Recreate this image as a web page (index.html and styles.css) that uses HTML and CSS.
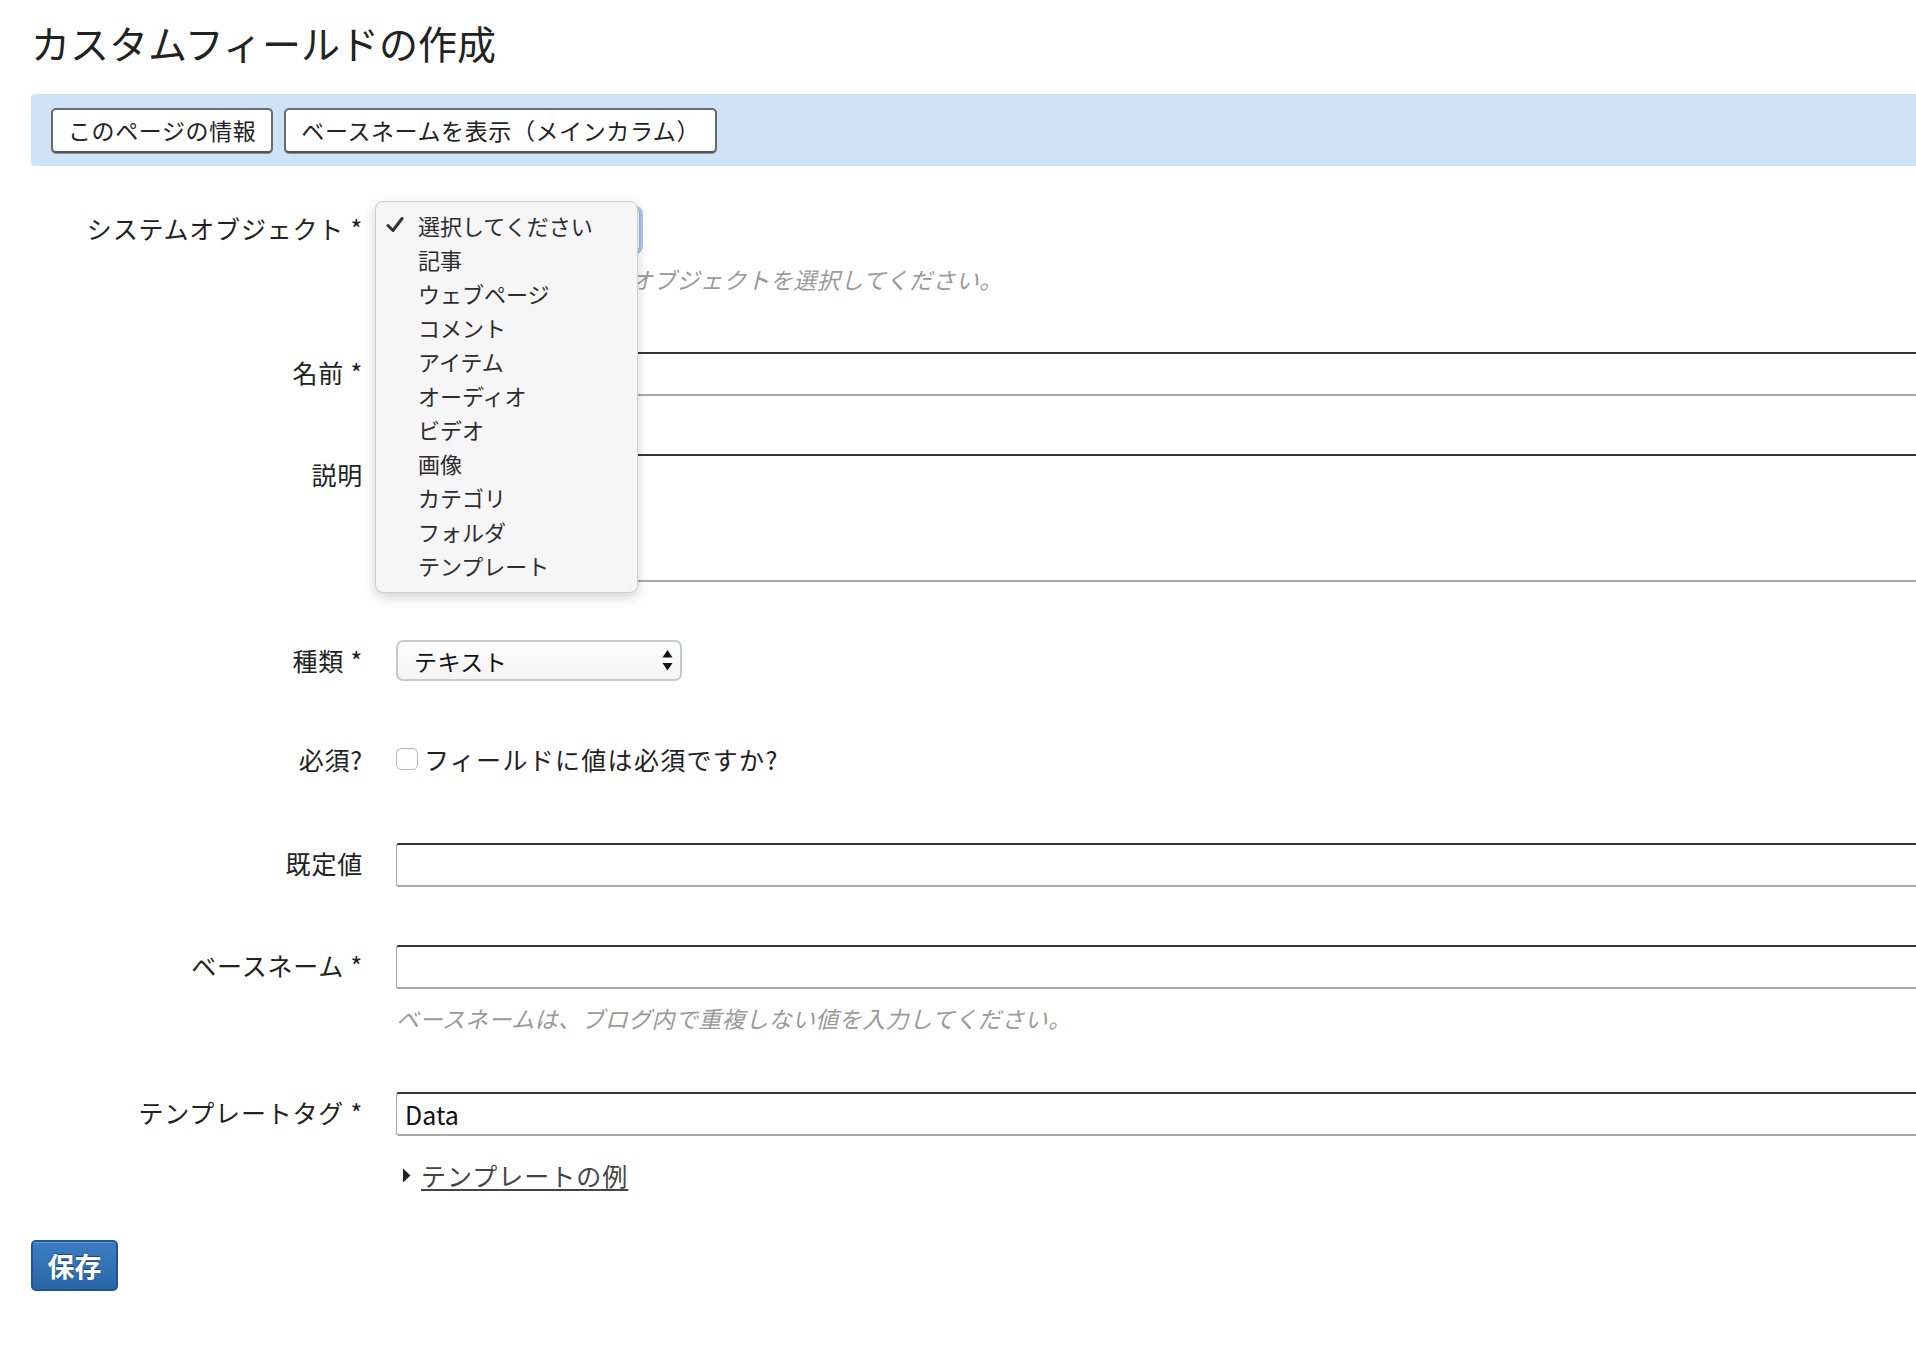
FILE: index.html
```html
<!DOCTYPE html>
<html lang="ja">
<head>
<meta charset="utf-8">
<title>カスタムフィールドの作成</title>
<link rel="stylesheet" href="styles.css">
</head>
<body>
<div class="page">
  <h1 class="title">カスタムフィールドの作成</h1>
  <div class="toolbar">
    <button class="tool-btn" type="button">このページの情報</button>
    <button class="tool-btn" type="button">ベースネームを表示（メインカラム）</button>
  </div>

  <form class="form">
    <div class="field field-object">
      <label class="field-label">システムオブジェクト *</label>
      <div class="field-body">
        <div class="object-select">
          <div class="select-focus"></div>
          <ul class="popup">
            <li class="popup-item selected"><svg class="check" width="18" height="17" viewBox="0 0 18 17"><path d="M2 9.5 L7 14.5 L16 2.5" fill="none" stroke="#333" stroke-width="3" stroke-linecap="round" stroke-linejoin="round"/></svg>選択してください</li>
            <li class="popup-item">記事</li>
            <li class="popup-item">ウェブページ</li>
            <li class="popup-item">コメント</li>
            <li class="popup-item">アイテム</li>
            <li class="popup-item">オーディオ</li>
            <li class="popup-item">ビデオ</li>
            <li class="popup-item">画像</li>
            <li class="popup-item">カテゴリ</li>
            <li class="popup-item">フォルダ</li>
            <li class="popup-item">テンプレート</li>
          </ul>
        </div>
        <p class="hint hint-object">フィールドを追加するオブジェクトを選択してください。</p>
      </div>
    </div>

    <div class="field">
      <label class="field-label">名前 *</label>
      <div class="field-body"><div class="text-input"></div></div>
    </div>

    <div class="field">
      <label class="field-label">説明</label>
      <div class="field-body"><div class="text-input textarea"></div></div>
    </div>

    <div class="field">
      <label class="field-label">種類 *</label>
      <div class="field-body">
        <div class="type-select">
          <span>テキスト</span>
          <svg class="arrows" width="11" height="21" viewBox="0 0 11 21"><path d="M5.5 0 L10.5 7.5 L0.5 7.5 Z" fill="#111"/><path d="M5.5 20.5 L10.5 13 L0.5 13 Z" fill="#111"/></svg>
        </div>
      </div>
    </div>

    <div class="field field-check">
      <label class="field-label">必須?</label>
      <div class="field-body check-row">
        <span class="checkbox"></span>
        <span class="check-text">フィールドに値は必須ですか?</span>
      </div>
    </div>

    <div class="field">
      <label class="field-label">既定値</label>
      <div class="field-body"><div class="text-input"></div></div>
    </div>

    <div class="field field-basename">
      <label class="field-label">ベースネーム *</label>
      <div class="field-body">
        <div class="text-input"></div>
        <p class="hint hint-basename">ベースネームは、ブログ内で重複しない値を入力してください。</p>
      </div>
    </div>

    <div class="field field-tag">
      <label class="field-label">テンプレートタグ *</label>
      <div class="field-body">
        <div class="text-input"><span class="input-value">Data</span></div>
        <div class="example">
          <svg class="tri" width="9" height="15" viewBox="0 0 9 15"><path d="M1 0.5 L8.5 7.5 L1 14.5 Z" fill="#222"/></svg>
          <a class="example-link" href="#">テンプレートの例</a>
        </div>
      </div>
    </div>
  </form>

  <button class="save" type="button">保存</button>
</div>
</body>
</html>
```

FILE: styles.css
```css
html, body {
  margin: 0;
  padding: 0;
  background: #fff;
  overflow: hidden;
}

body {
  font-family: "Noto Sans CJK JP", "Noto Sans", sans-serif;
  color: #222;
}

.page {
  padding: 0 0 0 31px;
}

.title {
  margin: 19px 0 29px;
  font-size: 39px;
  line-height: 46px;
  font-weight: 400;
  color: #222;
}

.toolbar {
  display: flex;
  gap: 11px;
  height: 72px;
  box-sizing: border-box;
  padding: 14px 20px;
  background: #cfe3f6;
  border-radius: 4px 0 0 4px;
}

.tool-btn {
  height: 45px;
  padding: 0 15px;
  font-family: inherit;
  font-size: 23px;
  letter-spacing: 0.6px;
  line-height: 1;
  color: #222;
  background: #fff;
  border: 2px solid #6b6b6b;
  border-bottom-color: #555;
  border-radius: 5px;
  box-shadow: 0 1px 0 #8a8a8a;
}

.form {
  margin: 42px 0 0;
}

.field {
  display: flex;
  align-items: flex-start;
  gap: 33px;
  margin-bottom: 58px;
}

.field-label {
  flex: 0 0 332px;
  text-align: right;
  font-size: 25px;
  letter-spacing: 0.8px;
  line-height: 40px;
  color: #222;
  white-space: nowrap;
}

.field-body {
  flex: 1;
  min-width: 0;
}

/* system object select (opened) */
.object-select {
  position: relative;
  width: 244px;
  height: 42px;
}

.select-focus {
  height: 42px;
  border-radius: 6px;
  border: 1px solid #9dbde6;
  box-shadow: 0 0 0 3px #a9c8ef;
  background: #fff;
}

.popup {
  position: absolute;
  left: -21px;
  top: -7px;
  width: 263px;
  box-sizing: border-box;
  margin: 0;
  padding: 6px 0 10px;
  list-style: none;
  background: #f6f6f6;
  border: 1px solid #cfcfcf;
  border-radius: 8px;
  box-shadow: 0 4px 12px rgba(0, 0, 0, 0.18);
  z-index: 2;
}

.popup-item {
  position: relative;
  height: 34px;
  line-height: 34px;
  padding-left: 42px;
  font-size: 22px;
  color: #2d2d2d;
  white-space: nowrap;
}

.check {
  position: absolute;
  left: 10px;
  top: 8px;
}

.hint {
  margin: 0;
  font-size: 23px;
  letter-spacing: 0.4px;
  line-height: 30px;
  font-style: italic;
  color: #9a9a9a;
  white-space: nowrap;
}

.hint-object {
  margin-top: 14px;
}

.field-object {
  margin-bottom: 58px;
}

/* text inputs */
.text-input {
  width: 1600px;
  height: 44px;
  box-sizing: border-box;
  border: 1px solid #aaa;
  border-top: 2px solid #333;
  border-bottom: 2px solid #aaa;
  border-radius: 3px;
  background: #fff;
  display: flex;
  align-items: center;
  padding-left: 8px;
}

.textarea {
  height: 128px;
}

.input-value {
  font-size: 25px;
  line-height: 30px;
  color: #111;
}

/* type select */
.type-select {
  width: 286px;
  height: 41px;
  box-sizing: border-box;
  border: 2px solid #c6c9cd;
  border-radius: 7px;
  background: linear-gradient(#fdfdfd, #f4f4f4);
  display: flex;
  align-items: center;
  justify-content: space-between;
  padding: 0 7px 0 16px;
  font-size: 23px;
  letter-spacing: 0.5px;
  color: #111;
}

/* checkbox */
.field-check {
  margin-bottom: 64px;
}

.check-row {
  display: flex;
  align-items: center;
  gap: 6px;
  height: 40px;
}

.checkbox {
  width: 20px;
  height: 20px;
  border: 1.5px solid #b8b8b8;
  border-radius: 5px;
  background: #fff;
  box-shadow: inset 0 1px 1px rgba(0, 0, 0, 0.05);
}

.check-text {
  font-size: 25px;
  letter-spacing: 1.3px;
  line-height: 40px;
  color: #222;
}

.field-basename {
  margin-bottom: 59px;
}

.hint-basename {
  margin-top: 14px;
}

.field-tag {
  margin-bottom: 50px;
}

.example {
  display: flex;
  align-items: center;
  gap: 10px;
  margin: 24px 0 0 6px;
  height: 30px;
}

.example-link {
  font-size: 25px;
  letter-spacing: 1px;
  line-height: 30px;
  color: #444;
  text-decoration: underline;
  text-underline-offset: 3px;
}

.save {
  width: 87px;
  height: 51px;
  padding: 0;
  font-family: inherit;
  font-size: 27px;
  font-weight: 700;
  color: #fff;
  background: linear-gradient(#3b7dc2, #2a66a6);
  border: 2px solid #1f5597;
  border-radius: 5px;
  text-shadow: 0 -1px 1px rgba(0, 0, 0, 0.45);
  box-shadow: inset 0 1px 0 rgba(255, 255, 255, 0.25);
}
```
